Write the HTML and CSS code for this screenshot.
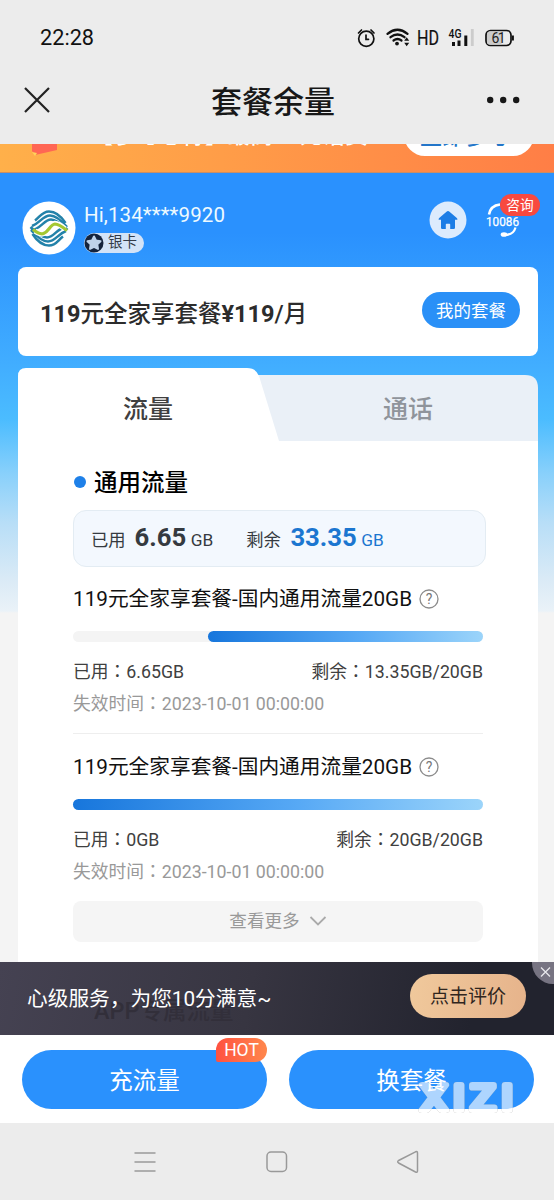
FILE: index.html
```
<!DOCTYPE html>
<html lang="zh-CN">
<head>
<meta charset="utf-8">
<title>套餐余量</title>
<link rel="stylesheet" href="styles.css">
</head>
<body>
<div class="phone">
  <header class="status">
    <span class="clock">22:28</span>
    <svg class="status-icons" width="160" height="24" viewBox="0 0 160 24">
      <g fill="none" stroke="#111" stroke-width="1.7" stroke-linecap="round">
        <circle cx="12.300" cy="13.700" r="7.600"/>
        <path d="M12 10v4.300h2.500M4.500 8l3-3M17 5l3 3"/>
        <path d="M33.500 8.800q10-8 20 0" stroke-width="2.300"/>
        <path d="M36.500 12.200q7-5.500 14 0" stroke-width="2.300"/>
        <path d="M39.500 15.500q4-3 8 0" stroke-width="2.200"/>
      </g>
      <circle cx="43" cy="18.600" r="1.900" fill="#111"/>
      <path d="M50.200 15.700l2.500-3.500 2.500 3.500zM50.200 17.700l2.500 3.500 2.500-3.500z" fill="#111"/>
      <text x="63" y="20" class="hd" textLength="22" lengthAdjust="spacingAndGlyphs">HD</text>
      <text x="94.500" y="12.500" class="net" textLength="13" lengthAdjust="spacingAndGlyphs">4G</text>
      <path d="M99.500 17v4M105 15.500v5.500M111.800 10.500v10.500" stroke="#111" stroke-width="3"/>
      <path d="M118.300 4v17" stroke="#ccc" stroke-width="2.800"/>
      <rect x="132" y="5.500" width="25" height="15" rx="4.500" fill="#ececec" stroke="#111" stroke-width="1.700"/>
      <path d="M135.500 6.500h12v13h-12q-2.500 0-2.500-2.500V9q0-2.500 2.500-2.500z" fill="#ccc"/>
      <path d="M158.900 10.500v5" stroke="#111" stroke-width="2"/>
      <text x="137.500" y="18" class="battery" textLength="14">61</text>
    </svg>
  </header>
  <nav class="titlebar">
    <svg class="close" width="28" height="28" viewBox="0 0 28 28"><path d="M2 2l24 24M26 2L2 26" stroke="#222" stroke-width="2.200" fill="none"/></svg>
    <h1>套餐余量</h1>
    <svg class="dots" width="36" height="8" viewBox="0 0 36 8" fill="#181818"><circle cx="3.200" cy="4" r="3.200"/><circle cx="16.200" cy="4" r="3.200"/><circle cx="29.200" cy="4" r="3.200"/></svg>
  </nav>
  <div class="banner">
    <svg class="gift" width="26" height="12" viewBox="0 0 26 12"><path d="M0 0h25v6L3 11 0 7z" fill="#ff6654"/><path d="M0 8l5 1-2 3z" fill="#ffd35a"/></svg>
    <span class="banner-text">【参与必得】最高10元话费</span>
    <span class="banner-btn">立即参与</span>
  </div>

  <main class="main">
    <section class="user">
      <svg class="avatar" width="54" height="54" viewBox="0 0 54 54">
        <circle cx="27" cy="27" r="26.500" fill="#fff"/>
        <g fill="none" stroke="#2382a9" stroke-width="2.500">
          <path d="M13 19.500C18 16 20 10.500 27 10.500Q36 10.500 43.500 22"/>
          <path d="M10 25C18 22 21 14.500 28 14.500Q35 14.500 45 26"/>
          <path d="M9 29.500C19 28 22 18.500 29 18.500Q35 18.500 45.500 29"/>
          <g transform="rotate(180 27 27.500)">
            <path d="M13 19.500C18 16 20 10.500 27 10.500Q36 10.500 43.500 22"/>
            <path d="M10 25C18 22 21 14.500 28 14.500Q35 14.500 45 26"/>
            <path d="M9 29.500C19 28 22 18.500 29 18.500Q35 18.500 45.500 29"/>
          </g>
          <path d="M13 30Q19 34 21.500 32.500C27 30.500 28 23.500 33 22.500Q37 22.500 43 28" stroke="#fff" stroke-width="5.500"/>
          <path d="M11 28.500Q18 34 21.500 32.500C27 30.500 28 23.500 33 23Q37 23 45 29.500" stroke="#a4c832" stroke-width="3.200"/>
        </g>
      </svg>
      <div class="who">
        <div class="phone-no">Hi,134****9920</div>
        <div class="level">
          <svg width="20" height="20" viewBox="0 0 20 20"><circle cx="10" cy="10" r="9.500" fill="#14233c"/><path d="M10 3.500l2 4 4.500.700-3.200 3.200.700 4.500-4-2.100-4 2.100.700-4.500L3.500 8.200l4.500-.700z" fill="#bfd3ea" stroke="#bfd3ea" stroke-width="2" stroke-linejoin="round"/></svg>
          <span>银卡</span>
        </div>
      </div>
      <svg class="home" width="38" height="38" viewBox="0 0 38 38"><circle cx="19" cy="19" r="18.500" fill="#dcebfd"/><path d="M19 10q.800 0 1.500.700l7.300 6.200q1 .900.500 1.800h-2.300v8q0 1.300-1.300 1.300h-3.500v-4.500q0-.700-.7-.7h-3q-.7 0-.7.700V28h-3.500q-1.300 0-1.300-1.300v-8H9.700q-.5-.9.500-1.800l7.300-6.200Q18.200 10 19 10z" fill="#1c7de6"/></svg>
      <div class="service">
        <svg width="36" height="40" viewBox="0 0 36 40"><path d="M4 14.500Q5.500 5.500 15 4.500" fill="none" stroke="#fff" stroke-width="2.600"/><path d="M30.500 27.500q-2 7.500-11 7.500" fill="none" stroke="#fff" stroke-width="2.200"/><ellipse cx="19" cy="34.500" rx="3.300" ry="2.300" fill="#fff"/><text x="1" y="25.500" textLength="33" lengthAdjust="spacingAndGlyphs" class="svc-no">10086</text></svg>
        <span class="ask">咨询</span>
      </div>
    </section>

    <section class="plan">
      <span class="plan-name"><b>119</b>元全家享套餐<b>¥119</b>/月</span>
      <span class="plan-btn">我的套餐</span>
    </section>

    <section class="usage">
      <div class="tabs">
        <svg class="tab-shape" width="520" height="73" viewBox="0 0 520 73"><path d="M220 7H507Q520 7 520 20V73H220z" fill="#eaf0f7"/><path d="M0 73V8Q0 0 8 0H229Q238 0 241 8L261 73z" fill="#fff"/></svg>
        <span class="tab on">流量</span>
        <span class="tab">通话</span>
      </div>
      <div class="panel">
        <h2><i></i>通用流量</h2>
        <div class="summary">
          <span class="lbl">已用</span><b>6.65</b><span class="unit">GB</span>
          <span class="lbl rest">剩余</span><b class="blue">33.35</b><span class="unit blue">GB</span>
        </div>
        <article class="pack">
          <h3><span>119元全家享套餐-国内通用流量20GB</span><svg width="20" height="20" viewBox="0 0 20 20"><circle cx="10" cy="10" r="9" fill="none" stroke="#8c8c8c" stroke-width="1.300"/><text x="10" y="15" text-anchor="middle" class="q">?</text></svg></h3>
          <div class="bar"><div class="fill" style="width:67%"></div></div>
          <div class="nums"><span>已用<span lang="zh-TW">：</span>6.65GB</span><span>剩余<span lang="zh-TW">：</span>13.35GB/20GB</span></div>
          <div class="expire">失效时间<span lang="zh-TW">：</span>2023-10-01 00:00:00</div>
        </article>
        <article class="pack second">
          <h3><span>119元全家享套餐-国内通用流量20GB</span><svg width="20" height="20" viewBox="0 0 20 20"><circle cx="10" cy="10" r="9" fill="none" stroke="#8c8c8c" stroke-width="1.300"/><text x="10" y="15" text-anchor="middle" class="q">?</text></svg></h3>
          <div class="bar"><div class="fill" style="width:100%"></div></div>
          <div class="nums"><span>已用<span lang="zh-TW">：</span>0GB</span><span>剩余<span lang="zh-TW">：</span>20GB/20GB</span></div>
          <div class="expire">失效时间<span lang="zh-TW">：</span>2023-10-01 00:00:00</div>
        </article>
        <div class="more">查看更多<svg width="18" height="12" viewBox="0 0 18 12"><path d="M1.500 2L9 9.500 16.500 2" fill="none" stroke="#aaa" stroke-width="1.800"/></svg></div>
      </div>
    </section>
  </main>

  <aside class="rate">
    <span class="under">APP专属流量</span>
    <span class="rate-text">心级服务，为您10分满意~</span>
    <span class="rate-btn">点击评价</span>
    <svg class="rate-x" width="22" height="23" viewBox="0 0 22 23"><circle cx="21" cy="1" r="21" fill="#777482"/><path d="M9 5.500l9 9M18 5.500l-9 9" stroke="#e8e8ec" stroke-width="1.300"/></svg>
  </aside>

  <footer class="actions">
    <div class="act">充流量<span class="hot">HOT</span></div>
    <div class="act">换套餐</div>
    <svg class="mark" width="106" height="44" viewBox="0 0 106 44"><text transform="scale(1.2 1)" x="17.500 38.300 58.300 78.600" y="33" text-anchor="middle">XIZI</text></svg>
  </footer>

  <div class="sysnav">
    <svg width="24" height="24" viewBox="0 0 24 24"><path d="M1.500 3h21M1.500 12h21M1.500 21h21"/></svg>
    <svg width="24" height="24" viewBox="0 0 24 24"><rect x="2" y="2" width="19.500" height="19.500" rx="4"/></svg>
    <svg width="24" height="24" viewBox="0 0 24 24"><path d="M19.500 1.800L2.600 10.500q-1.800 1.200 0 2.500l16.900 9q2 .700 2-1.300V3q0-1.900-2-1.200z"/></svg>
  </div>
</div>
</body>
</html>
```
FILE: styles.css
```
* { box-sizing: border-box; }
body {
  margin: 0;
  font-family: Roboto, "Noto Sans CJK SC", sans-serif;
  background: #f4f4f4;
}
h1, h2, h3 { margin: 0; font-weight: 500; }
svg { display: block; flex: none; }
span, div, h1, h2, h3 { white-space: nowrap; }
.phone { width: 554px; height: 1200px; overflow: hidden; display: flex; flex-direction: column; }

.status { height: 66px; background: #ececec; display: flex; justify-content: space-between; padding: 25px 40px 0; color: #111; }
.clock { font-size: 21.700px; line-height: 26px; }
.status-icons { margin-right: 0; }
.hd { font: 19.500px Roboto; fill: #111; stroke: #111; stroke-width: .2; }
.net { font: 500 12px Roboto; fill: #111; }
.battery { font: 14px Roboto; fill: #222; }

.titlebar { height: 78px; background: #ececec; display: grid; grid-template-columns: 36px 1fr 36px; align-items: center; padding: 0 31px 10px 23px; color: #181818; }
.titlebar h1 { font-size: 31px; line-height: 36px; text-align: center; padding-top: 5px; }

.banner { height: 29px; background: linear-gradient(90deg, #ffb04a, #ff9d48 40%, #ff7e46); display: flex; align-items: flex-start; overflow: hidden; padding-left: 32px; border-bottom: 1px solid #c78e68; }
.banner-text { color: #fff; font-size: 22px; font-weight: 500; line-height: 28px; margin: -22px 0 0 33px; width: 313px; letter-spacing: .8px; }
.banner-btn { width: 130px; height: 42px; margin-top: -30px; border-radius: 21px; background: #fff; color: #2376c9; font-size: 22px; font-weight: 500; line-height: 45px; text-align: center; padding-right: 10px; }

.main { height: 789px; flex: none; padding: 27px 16px 0 18px; background: linear-gradient(180deg, #2a91fe 0, #2a91fe 60px, #41adff 190px, #4bbcff 246px, #88d0fb 300px, #b8def7 350px, #dcebf6 410px, #eaf2f8 438px, #f4f4f4 440px); }
.user { height: 67px; display: flex; padding-left: 4px; }
.avatar { margin-top: 1px; }
.who { width: 352px; padding: 2px 0 0 8px; }
.phone-no { color: #eefaff; font-size: 20.500px; line-height: 26px; letter-spacing: .1px; }
.level { width: 60px; height: 20px; margin-top: 5px; border-radius: 10px; background: #d3e3f7; display: flex; align-items: center; font-size: 14.500px; line-height: 20px; color: #333b48; }
.level span { margin: 0 0 0 4px; }
.home { margin: 1px 18px 0 1px; }
.service { position: relative; }
.ask { position: absolute; left: 15px; top: -6px; width: 40px; height: 22px; border-radius: 11px; background: #f8493f; color: #fff; font-size: 13.700px; line-height: 22px; text-align: center; }
.svc-no { font: 12.700px Roboto; fill: #fff; stroke: #fff; stroke-width: .25; }

.plan { width: 520px; height: 89px; background: #fff; border-radius: 8px; display: flex; align-items: center; justify-content: space-between; padding: 0 18px 0 22px; }
.plan-name { font-size: 23.500px; font-weight: 500; color: #2c2c2c; }
.plan-name b { font-weight: 700; }
.plan-btn { width: 98px; height: 36px; margin-bottom: 4px; border-radius: 18px; background: #2a90f7; color: #fff; font-size: 17.500px; line-height: 38px; text-align: center; }

.usage { margin-top: 12px; width: 520px; }
.tabs { height: 73px; display: grid; grid-template-columns: 260px 260px; position: relative; }
.tab-shape { position: absolute; left: 0; top: 0; }
.tab { position: relative; font-size: 25px; font-weight: 500; line-height: 84px; text-align: center; color: #8f949b; height: 73px; }
.tab.on { color: #404040; }
.panel { background: #fff; height: 521px; padding: 24px 55px 0; }
h2 { font-size: 23.500px; line-height: 34px; height: 34px; display: flex; align-items: center; color: #000; padding-top: 2px; }
h2 i { width: 12px; height: 12px; border-radius: 50%; background: #1e80e8; margin: -2px 8px 0 1px; }
.summary { width: 413px; height: 57px; margin-top: 11px; border: 1.500px solid #e3ecf3; border-radius: 13px; background: #f3f8fe; display: flex; align-items: baseline; padding: 10px 0 0 17px; color: #353a40; font-size: 17.300px; line-height: 32px; }
.summary b { font-size: 25.700px; margin-left: 9px; font-weight: 700; }
.unit { margin-left: 4.500px; }
.rest { margin-left: 33px; }
.summary .blue { color: #1b76d0; }
.summary b.blue { margin-left: 9.500px; }
.pack { height: 167px; padding-top: 16px; border-bottom: 1px solid #eee; width: 410px; }
h3 { height: 32px; display: flex; align-items: center; gap: 7px; font-size: 20.700px; font-weight: 400; line-height: 32px; color: #111; }
.q { font: 14px Roboto; fill: #777; }
.bar { height: 11px; margin-top: 16px; border-radius: 6px; background: #f4f4f4; display: flex; justify-content: flex-end; }
.fill { border-radius: 6px; background: linear-gradient(90deg, #1776dc, #57a9f5 55%, #9bd4fa); }
.nums { display: flex; justify-content: space-between; margin-top: 14px; line-height: 32px; font-size: 17.750px; color: #404040; }
.nums [lang], .expire [lang] { font-family: "Noto Sans CJK TC", sans-serif; line-height: 1; }
.expire { color: #999; font-size: 17.750px; line-height: 32px; }
.second { border-bottom: 0; padding-top: 17px; }
.more { width: 410px; height: 41px; border-radius: 8px; background: #f5f5f5; display: flex; align-items: center; justify-content: center; gap: 9px; color: #999; font-size: 17.600px; line-height: 38px; padding-bottom: 1px; }

.rate { height: 73px; flex: none; background: linear-gradient(100deg, #454252, #373541 45%, #22232e 85%); display: flex; align-items: flex-start; position: relative; }
.rate-text { position: relative; color: #fff; font-size: 20.700px; line-height: 28px; margin: 23px 0 0 27px; width: 383px; }
.under { position: absolute; left: 94px; top: 35px; font-size: 23.500px; line-height: 28px; font-weight: 500; color: #322f3a; }
.rate-btn { width: 116px; height: 44px; margin-top: 12px; border-radius: 22px; background: linear-gradient(100deg, #f0c99c, #e6b38b); color: #30261e; font-size: 19px; line-height: 45px; text-align: center; }
.rate-x { position: absolute; right: 0; top: 0; }

.actions { height: 88px; flex: none; background: #fff; display: flex; gap: 22px; padding: 15px 0 0 22px; position: relative; }
.act { position: relative; width: 245px; height: 59px; border-radius: 30px; background: #2a91fd; color: #fff; font-size: 23.500px; line-height: 62px; text-align: center; }
.hot { position: absolute; right: 0; top: -12px; width: 51px; height: 24px; border-radius: 12px 12px 12px 2px; background: linear-gradient(90deg, #ff5140, #ff874c); color: #fff; font-size: 17.500px; line-height: 24px; }
.mark { position: absolute; left: 413px; top: 42px; opacity: .62; filter: drop-shadow(0 0 .7px #777); }
.mark text { font: 35px Roboto, sans-serif; fill: #fff; stroke: #fff; stroke-width: 5.800; stroke-linejoin: round; }

.sysnav { height: 77px; background: #ececec; display: flex; gap: 107.500px; padding: 27px 0 0 133px; }
.sysnav svg { fill: none; stroke: #999; stroke-width: 1.500; }
```
